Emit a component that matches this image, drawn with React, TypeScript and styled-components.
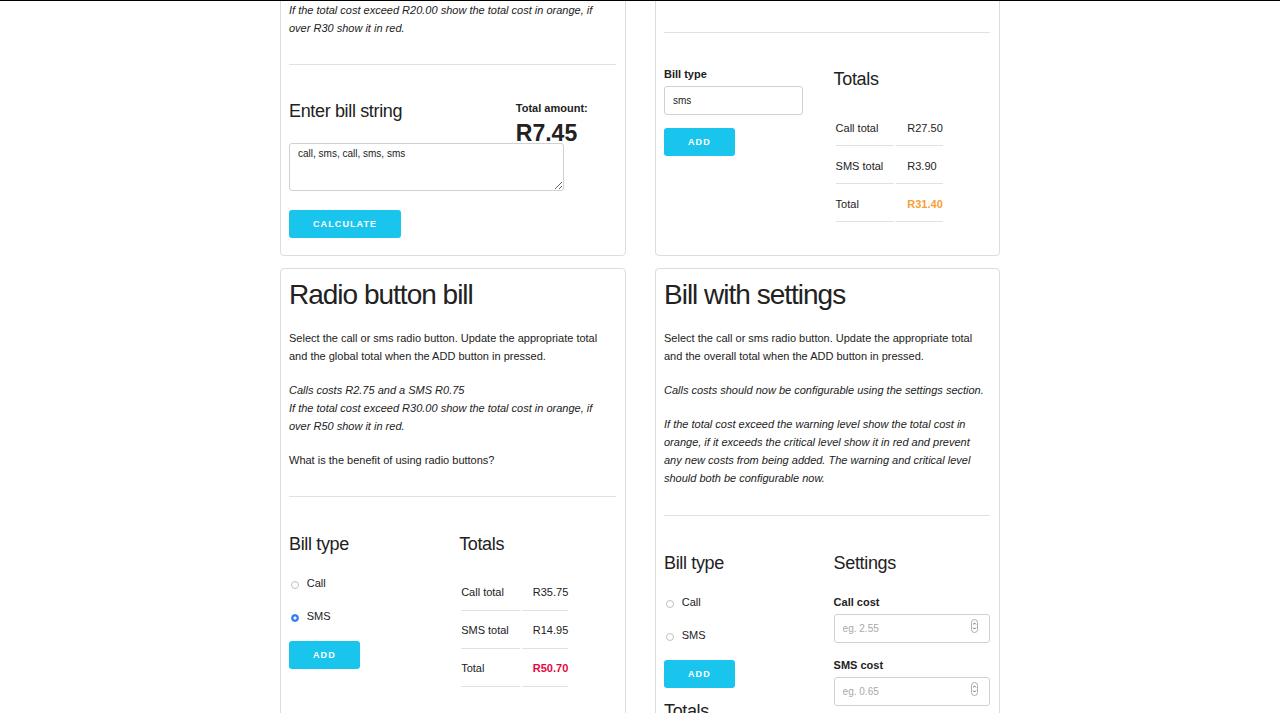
import React from 'react';
import styled, { createGlobalStyle, css } from 'styled-components';

const GlobalStyle = createGlobalStyle`
  html, body { margin: 0; padding: 0; background: #fff; }
  body {
    font-family: "Liberation Sans", Arial, Helvetica, sans-serif;
    font-size: 11px;
    line-height: 18px;
    color: #222;
  }
  * { box-sizing: border-box; }
`;

const Frame = styled.div`
  height: 713px;
  overflow: hidden;
  border-top: 1px solid #000;
`;

const Page = styled.main`
  width: 720px;
  margin: -131px auto 0;
  display: grid;
  grid-template-columns: 346px 345px;
  column-gap: 29px;
  row-gap: 12px;
`;

const Card = styled.section`
  border: 1px solid #dcdcdc;
  border-radius: 4px;
  padding: 9.5px 8.8px 6px 8px;
  background: #fff;
  min-width: 0;
`;

const Title = styled.h1`
  margin: 0 0 17.1px;
  font-size: 28px;
  line-height: 33.6px;
  font-weight: 400;
  letter-spacing: -1px;
  color: #222;
`;

const Text = styled.p<{ $italic?: boolean }>`
  max-width: 322px;
  margin: 0 0 16px;
  ${(p) => p.$italic && css`font-style: italic;`}
`;

const Divider = styled.hr<{ $top?: number; $bottom?: number }>`
  border: 0;
  border-top: 1px solid #e1e1e1;
  height: 0;
  margin: ${(p) => p.$top ?? 27}px 0 ${(p) => p.$bottom ?? 35}px;
`;

const Columns = styled.div<{ $template?: string; $gapBelow?: number }>`
  display: grid;
  grid-template-columns: ${(p) => p.$template ?? '48% 48%'};
  column-gap: 4%;
  align-items: start;
  margin-bottom: ${(p) => p.$gapBelow ?? 0}px;
`;

const Column = styled.div`
  min-width: 0;
`;

const SubHeading = styled.h4`
  margin: 0 0 17.5px;
  font-size: 18px;
  line-height: 24.3px;
  font-weight: 400;
  letter-spacing: -0.35px;
  color: #222;
`;

const Label = styled.label<{ $tight?: boolean }>`
  display: block;
  font-weight: 700;
  margin-bottom: 3px;
  ${(p) => p.$tight && css`line-height: 14px; margin-bottom: 5px;`}
`;

const AmountValue = styled.div`
  font-size: 23px;
  line-height: 27.6px;
  font-weight: 700;
  margin: 2px 0 -12px;
`;

const BillText = styled.textarea`
  display: block;
  width: 275px;
  height: 48px;
  margin: 0 0 19px;
  padding: 4px 8px;
  border: 1px solid #d1d1d1;
  border-radius: 3px;
  font-family: "Liberation Sans", Arial, sans-serif;
  font-size: 10px;
  line-height: 12px;
  color: #222;
  background: #fff;
  outline: none;
`;

const Field = styled.input<{ $full?: boolean }>`
  display: block;
  width: ${(p) => (p.$full ? '100%' : '139px')};
  height: 29px;
  margin: 0 0 13px;
  padding: 0 8px;
  border: 1px solid #d1d1d1;
  border-radius: 3px;
  font-family: "Liberation Sans", Arial, sans-serif;
  font-size: 10px;
  color: #222;
  background: #fff;
  outline: none;
  &::placeholder { color: #a9a9a9; }
  &::-webkit-inner-spin-button,
  &::-webkit-outer-spin-button { -webkit-appearance: none; margin: 0; }
  -moz-appearance: textfield;
`;

const NumberWrap = styled.div`
  position: relative;
`;

const Spinner = styled.svg`
  position: absolute;
  right: 12px;
  top: 5px;
  width: 7px;
  height: 14px;
  pointer-events: none;
`;

const Button = styled.button`
  display: block;
  width: fit-content;
  height: 28px;
  margin: 0 0 11px;
  padding: 0 24px;
  border: 0;
  border-radius: 3px;
  background: #19c5ec;
  color: #fff;
  font-family: "Liberation Sans", Arial, sans-serif;
  font-size: 9px;
  font-weight: 700;
  letter-spacing: 1.1px;
  text-transform: uppercase;
  cursor: pointer;
`;

const RadioGroup = styled.div`
  padding-top: 0;
`;

const RadioOption = styled.label`
  display: flex;
  align-items: center;
  height: 18px;
  margin-bottom: 15px;
  &:last-child { margin-bottom: 16px; }
`;

const Radio = styled.input.attrs({ type: 'radio' })`
  appearance: none;
  -webkit-appearance: none;
  flex: none;
  width: 8px;
  height: 8px;
  margin: 4px 7.7px 0 2px;
  border-radius: 50%;
  border: 1px solid #c2c2c2;
  background: #fff;
  &:checked {
    border-color: #2f7ef6;
    background: radial-gradient(circle, #fff 0 1.3px, #2f7ef6 1.8px);
  }
`;

const TotalsTable = styled.table`
  border-collapse: separate;
  border-spacing: 2px;
  margin: -1px 0 18px;
`;

const Cell = styled.td<{ $tone?: 'warning' | 'danger' }>`
  padding: 8.5px 11px;
  border-bottom: 1px solid #e1e1e1;
  text-align: left;
  white-space: nowrap;
  &:first-child { padding-left: 0; }
  &:last-child { padding-right: 0; }
  ${(p) => p.$tone === 'warning' && css`color: #f8a033; font-weight: 700;`}
  ${(p) => p.$tone === 'danger' && css`color: #e5063d; font-weight: 700;`}
`;

type Row = { label: string; value: string; tone?: 'warning' | 'danger' };

const Totals: React.FC<{ rows: Row[] }> = ({ rows }) => (
  <TotalsTable>
    <tbody>
      {rows.map((r) => (
        <tr key={r.label}>
          <Cell>{r.label}</Cell>
          <Cell $tone={r.tone}>{r.value}</Cell>
        </tr>
      ))}
    </tbody>
  </TotalsTable>
);

const SpinnerIcon = () => (
  <Spinner viewBox="0 0 7 14">
    <rect x="0.5" y="0.5" width="6" height="13" rx="3" fill="#fff" stroke="#9a9a9a" strokeWidth="0.8" />
    <path d="M2.1 5.4 L3.5 4 L4.9 5.4" fill="none" stroke="#444" strokeWidth="0.8" />
    <path d="M2.1 8.6 L3.5 10 L4.9 8.6" fill="none" stroke="#444" strokeWidth="0.8" />
  </Spinner>
);

const NumberField: React.FC<{ placeholder: string }> = ({ placeholder }) => (
  <NumberWrap>
    <Field type="number" $full placeholder={placeholder} />
    <SpinnerIcon />
  </NumberWrap>
);

export default function App() {
  return (
    <>
      <GlobalStyle />
      <Frame>
        <Page>
          <Card>
            <Title>Calculate bill</Title>
            <Text>Enter a comma separated list of calls and sms's and press the CALCULATE button to see the total.</Text>
            <Text $italic>
              Calls costs R2.75 and a SMS R0.75
              <br />
              If the total cost exceed R20.00 show the total cost in orange, if over R30 show it in red.
            </Text>
            <Divider $bottom={34} />
            <Columns $template="65.33% 30.67%" $gapBelow={2}>
              <Column>
                <SubHeading>Enter bill string</SubHeading>
              </Column>
              <Column>
                <Label as="div">Total amount:</Label>
                <AmountValue>R7.45</AmountValue>
              </Column>
            </Columns>
            <BillText defaultValue="call, sms, call, sms, sms" />
            <Button>Calculate</Button>
          </Card>

          <Card>
            <Title>Text input bill</Title>
            <Text>Enter the bill type (call or sms) into the textbox and press the ADD button to update the totals.</Text>
            <Text $italic>Calls costs R2.75 and a SMS R0.75</Text>
            <Divider $top={31.2} $bottom={34} />
            <Columns>
              <Column>
                <Label htmlFor="billType" $tight>Bill type</Label>
                <Field id="billType" type="text" defaultValue="sms" />
                <Button>Add</Button>
              </Column>
              <Column>
                <SubHeading>Totals</SubHeading>
                <Totals
                  rows={[
                    { label: 'Call total', value: 'R27.50' },
                    { label: 'SMS total', value: 'R3.90' },
                    { label: 'Total', value: 'R31.40', tone: 'warning' },
                  ]}
                />
              </Column>
            </Columns>
          </Card>

          <Card>
            <Title>Radio button bill</Title>
            <Text>Select the call or sms radio button. Update the appropriate total and the global total when the ADD button in pressed.</Text>
            <Text $italic>
              Calls costs R2.75 and a SMS R0.75
              <br />
              If the total cost exceed R30.00 show the total cost in orange, if over R50 show it in red.
            </Text>
            <Text>What is the benefit of using radio buttons?</Text>
            <Divider />
            <Columns>
              <Column>
                <SubHeading>Bill type</SubHeading>
                <RadioGroup>
                  <RadioOption>
                    <Radio name="radioBill" value="call" />
                    Call
                  </RadioOption>
                  <RadioOption>
                    <Radio name="radioBill" value="sms" defaultChecked />
                    SMS
                  </RadioOption>
                </RadioGroup>
                <Button>Add</Button>
              </Column>
              <Column>
                <SubHeading>Totals</SubHeading>
                <Totals
                  rows={[
                    { label: 'Call total', value: 'R35.75' },
                    { label: 'SMS total', value: 'R14.95' },
                    { label: 'Total', value: 'R50.70', tone: 'danger' },
                  ]}
                />
              </Column>
            </Columns>
          </Card>

          <Card>
            <Title>Bill with settings</Title>
            <Text>Select the call or sms radio button. Update the appropriate total and the overall total when the ADD button in pressed.</Text>
            <Text $italic>Calls costs should now be configurable using the settings section.</Text>
            <Text $italic>
              If the total cost exceed the warning level show the total cost in orange, if it exceeds the critical level show it in red and prevent any new costs from being added. The warning and critical level should both be configurable now.
            </Text>
            <Divider $top={28} />
            <Columns>
              <Column>
                <SubHeading>Bill type</SubHeading>
                <RadioGroup>
                  <RadioOption>
                    <Radio name="settingsBill" value="call" />
                    Call
                  </RadioOption>
                  <RadioOption>
                    <Radio name="settingsBill" value="sms" />
                    SMS
                  </RadioOption>
                </RadioGroup>
                <Button>Add</Button>
                <SubHeading>Totals</SubHeading>
                <Totals
                  rows={[
                    { label: 'Call total', value: 'R0.00' },
                    { label: 'SMS total', value: 'R0.00' },
                    { label: 'Total', value: 'R0.00' },
                  ]}
                />
              </Column>
              <Column>
                <SubHeading>Settings</SubHeading>
                <Label>Call cost</Label>
                <NumberField placeholder="eg. 2.55" />
                <Label>SMS cost</Label>
                <NumberField placeholder="eg. 0.65" />
                <Label>Warning level</Label>
                <NumberField placeholder="eg. 30.00" />
                <Label>Critical level</Label>
                <NumberField placeholder="eg. 65.00" />
                <Button>Update settings</Button>
              </Column>
            </Columns>
          </Card>
        </Page>
      </Frame>
    </>
  );
}
